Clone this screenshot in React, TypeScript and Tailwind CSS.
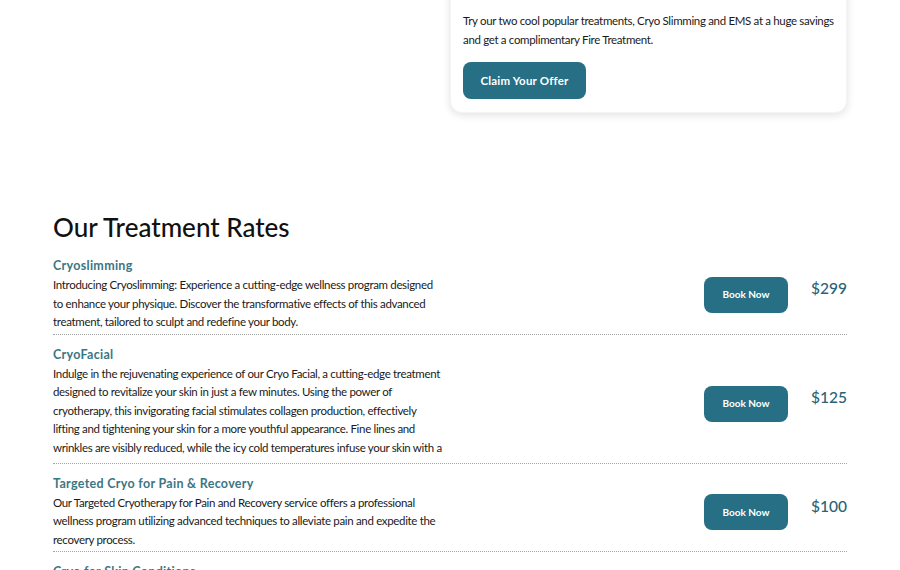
const treatments = [
  {
    name: "Cryoslimming",
    price: "$299",
    text: "Introducing Cryoslimming: Experience a cutting-edge wellness program designed to enhance your physique. Discover the transformative effects of this advanced treatment, tailored to sculpt and redefine your body.",
  },
  {
    name: "CryoFacial",
    price: "$125",
    text: "Indulge in the rejuvenating experience of our Cryo Facial, a cutting-edge treatment designed to revitalize your skin in just a few minutes. Using the power of cryotherapy, this invigorating facial stimulates collagen production, effectively lifting and tightening your skin for a more youthful appearance. Fine lines and wrinkles are visibly reduced, while the icy cold temperatures infuse your skin with a radiant glow, leaving it refreshed and renewed.",
  },
  {
    name: "Targeted Cryo for Pain & Recovery",
    price: "$100",
    text: "Our Targeted Cryotherapy for Pain and Recovery service offers a professional wellness program utilizing advanced techniques to alleviate pain and expedite the recovery process.",
  },
  {
    name: "Cryo for Skin Conditions",
    price: "$90",
    text: "Experience relief from a range of skin conditions with our targeted cryotherapy treatment, designed to calm inflammation and soothe irritated skin.",
  },
];

export default function App() {
  return (
    <div className="h-screen overflow-hidden bg-white font-['Lato',sans-serif] text-[#1a1a1a]">
      <div className="px-[53px]">
        {/* Offer card */}
        <div className="grid grid-cols-2">
          <div />
          <div className="-mt-[30px] rounded-xl border border-gray-100 bg-white px-3 pt-[40px] pb-[13px] shadow-[0_2px_8px_rgba(0,0,0,0.12)]">
            <p className="text-[11.5px] leading-[19px] tracking-[-0.33px]">
              Try our two cool popular treatments, Cryo Slimming and EMS at a huge savings and get a complimentary Fire Treatment.
            </p>
            <button className="mt-[13px] h-[37px] w-[123px] rounded-lg bg-[#266f84] text-[11.5px] font-bold tracking-[0.2px] text-white">
              Claim Your Offer
            </button>
          </div>
        </div>

        {/* Rates */}
        <h2 className="mt-[98px] mb-[3px] text-[26px] leading-[32px] font-medium text-[#111]">
          Our Treatment Rates
        </h2>

        <div>
          {treatments.map((t) => (
            <div
              key={t.name}
              className="flex items-center border-b border-dotted border-[#a5a5a5] pt-[10px] pb-[2px]"
            >
              <div className="w-[392px]">
                <h3 className="text-[12.5px] leading-[20px] font-bold tracking-[0.3px] text-[#3b7684]">
                  {t.name}
                </h3>
                <p className="max-h-[96px] overflow-hidden text-[11.5px] leading-[18.5px] tracking-[-0.33px]">
                  {t.text}
                </p>
              </div>
              <div className="ml-auto flex items-center gap-[23px]">
                <button className="mt-[2px] h-[36px] w-[84px] rounded-lg bg-[#266f84] text-[10px] font-bold text-white">
                  Book Now
                </button>
                <span className="mb-[10px] text-[15.5px] font-medium text-[#2b6274]">{t.price}</span>
              </div>
            </div>
          ))}
        </div>
      </div>
    </div>
  );
}
